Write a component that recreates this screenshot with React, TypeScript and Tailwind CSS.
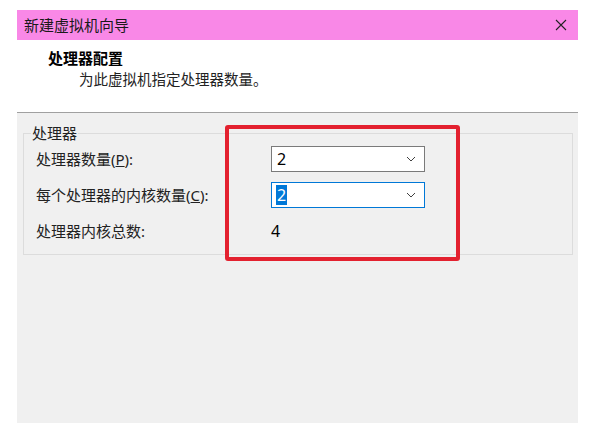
import React from "react";

function Combo({ value, focused }: { value: string; focused?: boolean }) {
  return (
    <div
      className={
        "flex h-[26px] w-[154px] items-center justify-between bg-white pl-[4px] pr-[7px] " +
        (focused ? "border border-[#0078D7]" : "border border-[#7A7A7A]")
      }
    >
      {focused ? (
        <span className="bg-[#0078D7] px-[1px] text-[16px] leading-[20px] text-white">{value}</span>
      ) : (
        <span className="px-[1px] text-[16px] leading-[20px] text-black">{value}</span>
      )}
      <svg width="10" height="6" viewBox="0 0 10 6" className="mr-[1px]">
        <path d="M1 1 L5 5 L9 1" fill="none" stroke="#404040" strokeWidth="1" />
      </svg>
    </div>
  );
}

export default function App() {
  const font = { fontFamily: '"Noto Sans", "Noto Sans CJK SC", sans-serif' };

  return (
    <div className="relative h-[434px] w-[591px] bg-white pt-[10px] pl-[17px]" style={font}>
      <div className="flex h-[413px] w-[561px] flex-col">
        {/* title bar */}
        <div className="flex h-[30px] items-center justify-between bg-[#F988E7] pl-[7px] pr-[11px]">
          <span className="text-[15px] text-[#1a1a1a]">新建虚拟机向导</span>
          <svg width="12" height="12" viewBox="0 0 12 12">
            <path d="M1 1 L11 11 M11 1 L1 11" stroke="#222" strokeWidth="1.1" />
          </svg>
        </div>

        {/* header */}
        <div className="h-[73px] border-b border-[#A0A0A0] bg-white pl-[31px] pt-[7px]">
          <div className="text-[15px] font-bold leading-[22px] text-black">处理器配置</div>
          <div className="pl-[31px] text-[14.5px] leading-[20px] text-[#222]">为此虚拟机指定处理器数量。</div>
        </div>

        {/* body */}
        <div className="flex-1 bg-[#F0F0F0] pt-[10px] pl-[6px] pr-[5px]">
          <fieldset className="h-[132px] border border-[#DCDCDC] pt-[3px]">
            <legend className="ml-[7px] px-[1px] text-[15px] leading-[20px] text-[#222]">处理器</legend>
            <div className="grid grid-cols-[235px_154px] items-center gap-y-[10px] pl-[12px] text-[15px] text-[#222]">
              <span>
                处理器数量(<span className="underline">P</span>):
              </span>
              <Combo value="2" />
              <span>
                每个处理器的内核数量(<span className="underline">C</span>):
              </span>
              <Combo value="2" focused />
              <span className="leading-[26px]">处理器内核总数:</span>
              <span className="text-[16px] leading-[26px] text-black">4</span>
            </div>
          </fieldset>
        </div>
      </div>

      {/* red annotation box */}
      <div className="absolute left-[225px] top-[125px] h-[136px] w-[235px] rounded-[3px] border-[4px] border-[#E3212F]" />
    </div>
  );
}
